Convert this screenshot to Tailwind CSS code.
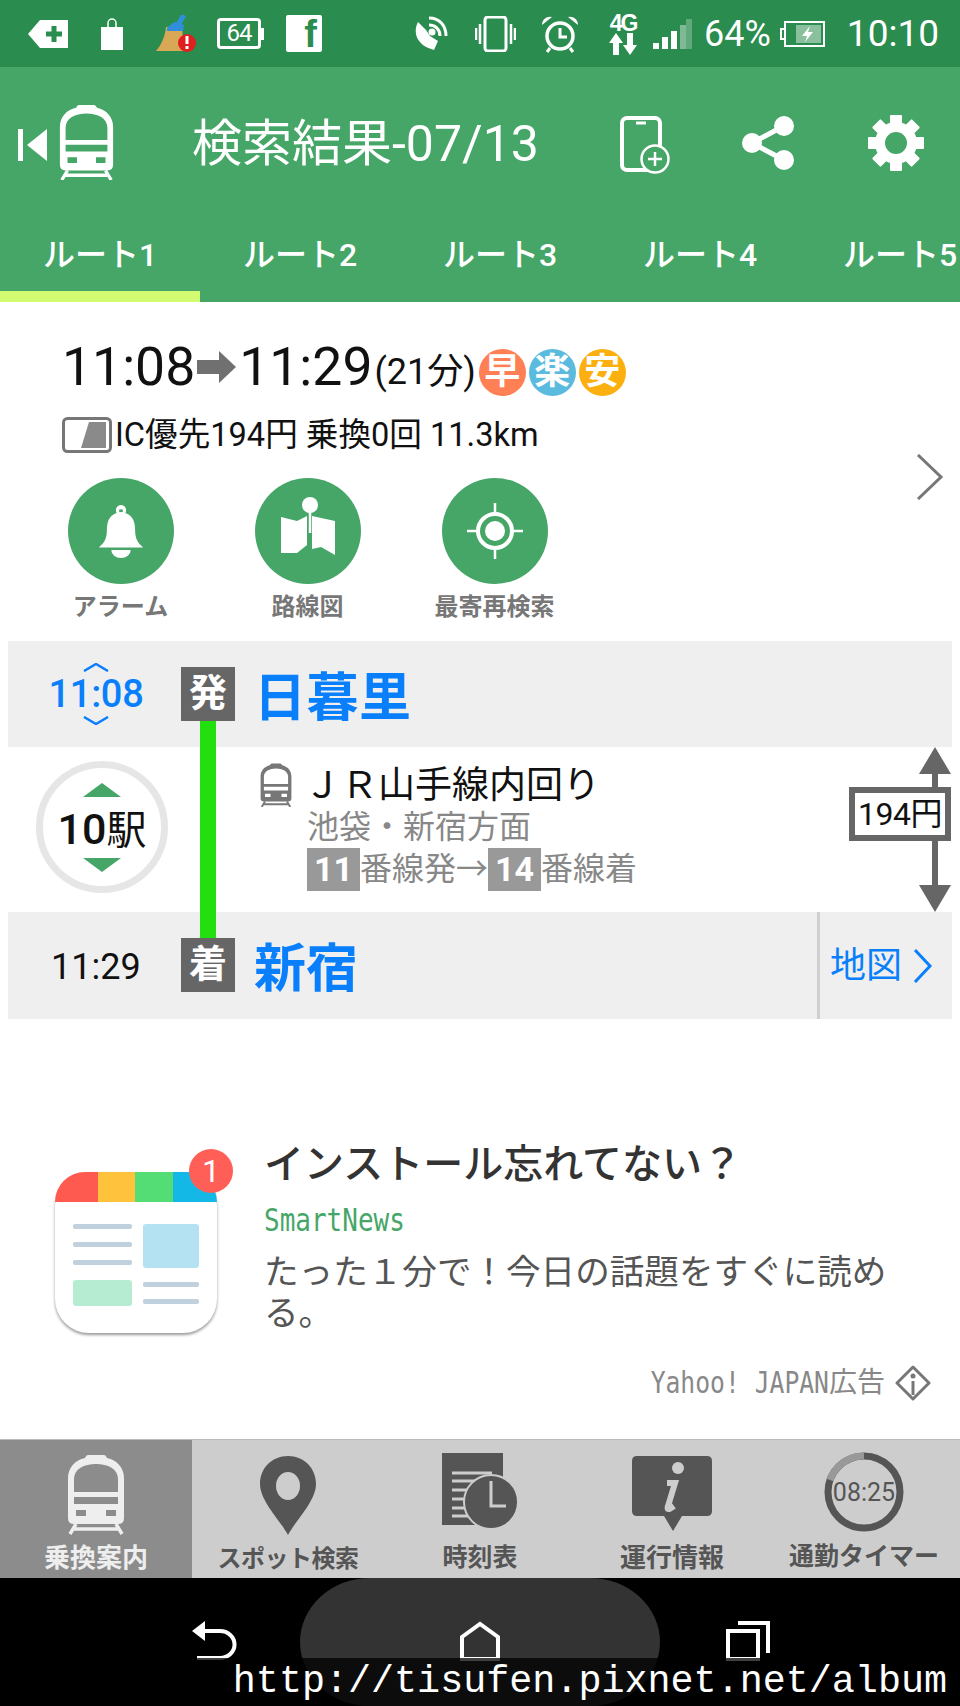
<!DOCTYPE html>
<html>
<head>
    <meta charset="utf-8">
    <title>検索結果</title>
    <script src="https://cdn.jsdelivr.net/npm/@tailwindcss/browser@4"></script>
</head>
<body class="font-[Roboto,'Noto_Sans_CJK_JP',sans-serif] bg-white">
<svg width="0" height="0" class="absolute">
    <symbol id="train" viewBox="0 0 60 80">
        <path fill-rule="evenodd" fill="currentColor" d="M22 1h16q2 0 3 3c10 2 17 10 17 20v40q0 6-6 6H8q-6 0-6-6V24C2 14 9 6 19 4q1-3 3-3zM8 38V25c0-10 10-15 22-15s22 5 22 15v13zM8 43h44v7H8zM10 56v6h10v-6zM40 56v6h10v-6z"/>
        <path fill="none" stroke="currentColor" stroke-width="3.5" d="M10 70L4 80M50 70L56 80M7 75H53"/>
    </symbol>
</svg>

<div class="relative w-[960px] h-[1706px] overflow-hidden">

    <!-- Status bar -->
    <div class="h-[67px] bg-[#2a8c4e] flex items-center text-white">
        <svg class="ml-[28px]" width="40" height="28" viewBox="0 0 40 28"><path fill="white" d="M12 0H40V28H12L0 14z"/><path stroke="#2a8c4e" stroke-width="5" d="M26 6V22M18 14H34"/></svg>
        <svg class="ml-[32px]" width="24" height="32" viewBox="0 0 24 32"><path fill="white" d="M1 9H23V32H1z"/><path fill="none" stroke="white" stroke-width="1.5" d="M8 9V5a4 4 0 0 1 8 0V9"/></svg>
        <svg class="ml-[32px]" width="40" height="38" viewBox="0 0 40 38"><path fill="#d9a857" d="M10 12H26L28 36H0C5 30 9 22 10 12z"/><path stroke="#2f8fdc" stroke-width="5" d="M28 0L22 10"/><path fill="#2f8fdc" d="M11 13l7-6 10 3-1 6H11z"/><circle cx="31" cy="28" r="9" fill="#e01f1f"/><path stroke="white" stroke-width="3" d="M31 21V29M31 31V34"/></svg>
        <div class="ml-[21px] w-[44px] h-[31px] border-[3px] border-white rounded-[4px] text-[24px] leading-[25px] text-center tracking-[-1px]">64</div>
        <div class="w-[3px] h-[12px] bg-white"></div>
        <div class="ml-[22px] w-[36px] h-[37px] bg-white rounded-[2px] text-[#2a8c4e] font-bold text-[38px] leading-[39px] text-right pr-[5px] font-['Liberation_Sans',sans-serif]">f</div>
        <svg class="ml-[92px]" width="34" height="35" viewBox="0 0 34 35"><path fill="white" d="M4 6C-2 18 4 30 20 34L24 25 16 20 12 14z"/><path fill="none" stroke="white" stroke-width="3" d="M15 2C26 2 32 10 32 20M15 9C21 9 26 13 26 20"/><circle cx="18" cy="16" r="3.5" fill="white"/></svg>
        <svg class="ml-[27px]" width="41" height="36" viewBox="0 0 41 36"><rect x="10" y="1" width="21" height="34" rx="3" fill="none" stroke="white" stroke-width="3"/><path stroke="white" stroke-width="2.5" d="M5 8V28M1 12V24M36 8V28M40 12V24"/></svg>
        <svg class="ml-[25px]" width="38" height="38" viewBox="0 0 38 38"><circle cx="19" cy="21" r="13" fill="none" stroke="white" stroke-width="3.5"/><path fill="none" stroke="white" stroke-width="3" d="M19 13V22H26M9 33L6 37M29 33L32 37"/><path fill="white" d="M1 10A8 8 0 0 1 11 2zM37 10A8 8 0 0 0 27 2z"/></svg>
        <div class="ml-[29px] w-[30px] flex flex-col items-center">
            <span class="text-[23px] leading-[20px] font-bold font-['Liberation_Sans',sans-serif] tracking-[-2px]">4G</span>
            <svg width="30" height="22" viewBox="0 0 30 22"><path fill="white" d="M8 0L15 10H11V22H5V10H1zM22 22L15 12H19V0H25V12H29z"/></svg>
        </div>
        <svg class="ml-[15px]" width="39" height="30" viewBox="0 0 39 30"><path fill="white" d="M0 24H6V30H0zM9 18H15V30H9zM18 12H24V30H18z"/><path fill="white" fill-opacity=".4" d="M27 6H33V30H27z"/><path fill="white" fill-opacity=".25" d="M33 0H39V30H33z"/></svg>
        <span class="ml-[12px] text-[36px] leading-[40px]">64%</span>
        <svg class="ml-[9px]" width="45" height="26" viewBox="0 0 45 26"><path fill="none" stroke="white" stroke-width="2" d="M4 8H1V18H4M5 1H44V25H5z"/><path fill="white" fill-opacity=".45" d="M16 4H41V22H16z"/><path fill="white" d="M30 5L22 15H27L25 21 33 11H28z"/></svg>
        <span class="ml-[22px] text-[37px] leading-[40px]">10:10</span>
    </div>

    <!-- Header -->
    <div class="h-[235px] bg-[#46a667] text-white flex flex-col">
        <div class="h-[153px] flex items-center">
            <svg class="ml-[18px] mt-[2px]" width="30" height="32" viewBox="0 0 30 32"><path fill="white" d="M0 0H5V32H0zM29 0V32L9 16z"/></svg>
            <svg class="ml-[10px] mt-[-4px]" width="57" height="76"><use href="#train"/></svg>
            <span class="ml-[77px] w-[350px] text-[50px] leading-[60px] whitespace-nowrap">検索結果-07/13</span>
            <svg class="ml-[78px] mt-[2px]" width="50" height="58" viewBox="0 0 50 58"><rect x="2" y="2" width="38" height="52" rx="5" fill="none" stroke="white" stroke-width="4"/><path stroke="white" stroke-width="3" d="M16 7H26"/><circle cx="35" cy="43" r="13.5" fill="#46a667" stroke="white" stroke-width="2.5"/><path stroke="white" stroke-width="2.5" d="M35 36V50M28 43H42"/></svg>
            <svg class="ml-[71px] mt-[-2px]" width="54" height="54" viewBox="0 0 54 54"><path fill="none" stroke="white" stroke-width="5" d="M43 10L11 27L43 44"/><circle cx="43" cy="10" r="10" fill="white"/><circle cx="11" cy="27" r="10" fill="white"/><circle cx="43" cy="44" r="10" fill="white"/></svg>
            <svg class="ml-[73px] mt-[-2px]" width="56" height="56" viewBox="0 0 56 56">
                <circle cx="28" cy="28" r="16" fill="none" stroke="white" stroke-width="10"/>
                <g fill="white">
                    <rect x="22" y="0" width="12" height="12" rx="1"/>
                    <rect x="22" y="44" width="12" height="12" rx="1"/>
                    <rect x="0" y="22" width="12" height="12" rx="1"/>
                    <rect x="44" y="22" width="12" height="12" rx="1"/>
                    <rect x="22" y="0" width="12" height="12" rx="1" transform="rotate(45 28 28)"/>
                    <rect x="22" y="44" width="12" height="12" rx="1" transform="rotate(45 28 28)"/>
                    <rect x="0" y="22" width="12" height="12" rx="1" transform="rotate(45 28 28)"/>
                    <rect x="44" y="22" width="12" height="12" rx="1" transform="rotate(45 28 28)"/>
                </g>
            </svg>
        </div>
        <div class="flex w-[1000px] h-[82px]">
            <div class="w-[200px] flex flex-col justify-end items-center border-b-[11px] border-[#d2fb72]"><span class="text-[32px] leading-[40px] font-medium mb-[16px]">ルート1</span></div>
            <div class="w-[200px] flex flex-col justify-end items-center border-b-[11px] border-transparent"><span class="text-[32px] leading-[40px] font-medium mb-[16px]">ルート2</span></div>
            <div class="w-[200px] flex flex-col justify-end items-center border-b-[11px] border-transparent"><span class="text-[32px] leading-[40px] font-medium mb-[16px]">ルート3</span></div>
            <div class="w-[200px] flex flex-col justify-end items-center border-b-[11px] border-transparent"><span class="text-[32px] leading-[40px] font-medium mb-[16px]">ルート4</span></div>
            <div class="w-[200px] flex flex-col justify-end items-center border-b-[11px] border-transparent"><span class="text-[32px] leading-[40px] font-medium mb-[16px]">ルート5</span></div>
        </div>
    </div>

    <!-- Summary -->
    <div class="h-[339px] flex">
        <div class="flex-1">
            <div class="mt-[32px] ml-[62px] h-[65px] flex items-center text-[#111]">
                <span class="text-[53.5px] leading-[60px]">11:08</span>
                <svg class="ml-[2px]" width="39" height="32" viewBox="0 0 39 32"><path fill="#707070" d="M0 9H22V0L39 16 22 32V23H0z"/></svg>
                <span class="ml-[3px] text-[53.5px] leading-[60px]">11:29</span>
                <span class="ml-[2px] mt-[10px] text-[36px] leading-[44px]">(21分)</span>
                <div class="ml-[3px] mt-[12px] w-[47px] h-[47px] rounded-full bg-[#ff8055] text-white font-bold text-[36px] leading-[46px] text-center">早</div>
                <div class="ml-[3px] mt-[12px] w-[47px] h-[47px] rounded-full bg-[#5bbbdf] text-white font-bold text-[36px] leading-[46px] text-center">楽</div>
                <div class="ml-[3px] mt-[12px] w-[47px] h-[47px] rounded-full bg-[#fbb010] text-white font-bold text-[36px] leading-[46px] text-center">安</div>
            </div>
            <div class="mt-[18px] ml-[62px] h-[36px] flex items-center text-[#111]">
                <svg width="50" height="36" viewBox="0 0 50 36"><rect x="1.5" y="1.5" width="47" height="33" rx="4" fill="white" stroke="#777" stroke-width="3"/><path fill="#8a8a8a" d="M19 31L27 5H44V31z"/></svg>
                <span class="ml-[3px] text-[32.6px] leading-[40px] whitespace-nowrap">IC優先194円 乗換0回 11.3km</span>
            </div>
            <div class="mt-[25px] ml-[27px] flex">
                <div class="w-[187px] flex flex-col items-center">
                    <div class="w-[106px] h-[106px] rounded-full bg-[#46a667] flex items-center justify-center">
                        <svg width="50" height="53" viewBox="0 0 50 60"><path fill="white" d="M25 0a6 6 0 0 1 5 9c9 3 11 11 11 20 0 9 3 14 9 19H0c6-5 9-10 9-19 0-9 2-17 11-20a6 6 0 0 1 5-9zM14 51H36A11 9 0 0 1 14 51z"/><path fill="#46a667" d="M23 5h4v3h-4z"/></svg>
                    </div>
                    <span class="mt-[6px] h-[34px] text-[24px] leading-[34px] font-bold text-[#777]">アラーム</span>
                </div>
                <div class="w-[187px] flex flex-col items-center">
                    <div class="w-[106px] h-[106px] rounded-full bg-[#46a667] flex items-center justify-center">
                        <svg width="54" height="58" viewBox="0 0 54 58" class="mt-[-10px]"><path fill="white" d="M0 20L16 24 26 19V48L16 56 0 56zM31 19L54 24V58L40 50 31 52z"/><circle cx="29" cy="8" r="8" fill="white"/><path stroke="white" stroke-width="2.5" d="M29 10V36"/></svg>
                    </div>
                    <span class="mt-[6px] h-[34px] text-[24px] leading-[34px] font-bold text-[#777]">路線図</span>
                </div>
                <div class="w-[187px] flex flex-col items-center">
                    <div class="w-[106px] h-[106px] rounded-full bg-[#46a667] flex items-center justify-center">
                        <svg width="56" height="56" viewBox="0 0 56 56"><circle cx="28" cy="28" r="17" fill="none" stroke="white" stroke-width="4"/><circle cx="28" cy="28" r="10" fill="white"/><path stroke="white" stroke-width="2.5" d="M28 0V12M28 44V56M0 28H12M44 28H56"/></svg>
                    </div>
                    <span class="mt-[6px] h-[34px] text-[24px] leading-[34px] font-bold text-[#777]">最寄再検索</span>
                </div>
            </div>
        </div>
        <svg class="mt-[152px] mr-[16px]" width="28" height="46" viewBox="0 0 28 46"><path fill="none" stroke="#777" stroke-width="3" d="M2 1L25 23 2 45"/></svg>
    </div>

    <!-- Route -->
    <div class="relative">
        <div class="mx-[8px] h-[106px] bg-[#efefef] flex items-center">
            <div class="ml-[41px] w-[94px] flex flex-col items-center text-[#0a7ffb]">
                <svg width="26" height="9" viewBox="0 0 26 9"><path fill="none" stroke="currentColor" stroke-width="2.5" d="M1 8L13 1 25 8"/></svg>
                <span class="text-[38px] leading-[44px] font-medium tracking-[-0.3px]">11:08</span>
                <svg width="26" height="9" viewBox="0 0 26 9"><path fill="none" stroke="currentColor" stroke-width="2.5" d="M1 1L13 8 25 1"/></svg>
            </div>
            <div class="relative z-10 ml-[38px] w-[54px] h-[54px] bg-[#666] text-white font-bold text-[38px] leading-[52px] text-center">発</div>
            <span class="ml-[19px] mt-[9px] text-[52px] leading-[60px] font-bold text-[#0a7ffb] tracking-[0.5px]">日暮里</span>
        </div>

        <div class="h-[165px] flex">
            <div class="ml-[36px] mt-[14px] w-[132px] h-[132px] rounded-full border-[7px] border-[#e6e6e6] flex flex-col items-center">
                <svg class="mt-[15px]" width="38" height="14" viewBox="0 0 38 14"><path fill="#46a667" d="M19 0L38 14H0z"/></svg>
                <div class="mt-[6px] h-[52px] flex items-baseline text-[#111] leading-[52px] whitespace-nowrap"><span class="text-[43px] font-medium">10</span><span class="text-[40px]">駅</span></div>
                <svg class="mt-[3px]" width="38" height="14" viewBox="0 0 38 14"><path fill="#46a667" d="M0 0H38L19 14z"/></svg>
            </div>
            <div class="ml-[90px] pt-[17px] w-[440px]">
                <div class="h-[42px] flex items-center">
                    <svg class="text-[#777]" width="36" height="44"><use href="#train"/></svg>
                    <span class="ml-[10px] mt-[2px] text-[37px] leading-[42px] text-[#111] whitespace-nowrap">ＪＲ山手線内回り</span>
                </div>
                <div class="ml-[49px] h-[42px] text-[32px] leading-[42px] text-[#888] whitespace-nowrap">池袋・新宿方面</div>
                <div class="ml-[49px] h-[43px] flex items-center text-[32px] leading-[43px] text-[#888]">
                    <span class="w-[53px] h-[43px] bg-[#999] text-white font-bold text-[34px] text-center">11</span>
                    <span class="whitespace-nowrap">番線発→</span>
                    <span class="w-[53px] h-[43px] bg-[#999] text-white font-bold text-[34px] text-center">14</span>
                    <span class="whitespace-nowrap">番線着</span>
                </div>
            </div>
            <div class="ml-auto mr-[9px] w-[102px] flex flex-col items-end">
                <svg width="32" height="27" viewBox="0 0 32 27"><path fill="#666" d="M16 0L32 27H0z"/></svg>
                <div class="w-[6px] h-[13px] mr-[13px] bg-[#666]"></div>
                <div class="w-[102px] h-[54px] border-[6px] border-[#666] bg-white text-[32px] leading-[42px] text-center text-[#111] tracking-[-0.5px] whitespace-nowrap">194円</div>
                <div class="w-[6px] h-[44px] mr-[13px] bg-[#666]"></div>
                <svg width="32" height="27" viewBox="0 0 32 27"><path fill="#666" d="M0 0H32L16 27z"/></svg>
            </div>
        </div>

        <div class="mx-[8px] h-[107px] bg-[#efefef] flex">
            <span class="ml-[43px] mt-[2px] w-[90px] self-center text-[36px] leading-[44px] text-[#111] whitespace-nowrap">11:29</span>
            <div class="relative z-10 ml-[40px] mt-[26px] w-[54px] h-[54px] bg-[#666] text-white font-bold text-[38px] leading-[52px] text-center">着</div>
            <span class="ml-[19px] mt-[8px] self-center text-[52px] leading-[60px] font-bold text-[#0a7ffb]">新宿</span>
            <div class="ml-auto w-[135px] border-l-[3px] border-[#cfcfcf] flex items-center text-[#0a7ffb]">
                <span class="ml-[10px] text-[36px] leading-[44px] whitespace-nowrap">地図</span>
                <svg class="ml-[11px]" width="20" height="34" viewBox="0 0 20 34"><path fill="none" stroke="#0a7ffb" stroke-width="3" d="M2 1L17 17 2 33"/></svg>
            </div>
        </div>

        <!-- line between stations -->
        <div class="absolute left-[200px] top-[79px] w-[16px] h-[218px] bg-[#22e00f]"></div>
    </div>

    <!-- Ad -->
    <div class="h-[420px] flex flex-col">
        <div class="pt-[123px] flex">
            <div class="relative ml-[55px] mt-[30px] w-[162px] h-[161px] rounded-[34px] bg-white shadow-[0_2px_3px_rgba(0,0,0,0.4)] overflow-visible">
                <div class="h-[30px] rounded-t-[34px] overflow-hidden flex">
                    <div class="w-[43px] bg-[#ff5a50]"></div>
                    <div class="w-[37px] bg-[#ffc23c]"></div>
                    <div class="w-[38px] bg-[#55dd75]"></div>
                    <div class="w-[44px] bg-[#14b8e6]"></div>
                </div>
                <div class="flex gap-[11px] ml-[18px] mt-[22px]">
                    <div class="w-[59px] flex flex-col">
                        <div class="h-[5px] rounded-[2px] bg-[#c0d0dc]"></div>
                        <div class="mt-[13px] h-[5px] rounded-[2px] bg-[#c0d0dc]"></div>
                        <div class="mt-[13px] h-[5px] rounded-[2px] bg-[#c0d0dc]"></div>
                        <div class="mt-[15px] h-[26px] rounded-[3px] bg-[#b5ecd2]"></div>
                    </div>
                    <div class="w-[56px] flex flex-col">
                        <div class="h-[44px] rounded-[3px] bg-[#b4e2f2]"></div>
                        <div class="mt-[14px] h-[5px] rounded-[2px] bg-[#c0d0dc]"></div>
                        <div class="mt-[12px] h-[5px] rounded-[2px] bg-[#c0d0dc]"></div>
                    </div>
                </div>
                <div class="absolute left-[134px] top-[-23px] w-[44px] h-[44px] rounded-full bg-[#ff5f57] text-white text-[32px] leading-[44px] text-center">1</div>
            </div>
            <div class="ml-[47px] w-[640px]">
                <div class="h-[46px] text-[40px] leading-[46px] font-medium text-[#333] whitespace-nowrap">インストール忘れてない？</div>
                <div class="mt-[12px] h-[40px] text-[26px] leading-[40px] text-[#46a667] font-['DejaVu_Sans_Mono',monospace] scale-y-[1.2] origin-center">SmartNews</div>
                <div class="mt-[12px] text-[34.6px] leading-[41px] text-[#555]">たった１分で！今日の話題をすぐに読める。</div>
            </div>
        </div>
        <div class="mt-[31px] pr-[29px] h-[36px] flex justify-end items-center text-[#888] whitespace-nowrap">
            <span class="text-[24.7px] leading-[36px] font-['DejaVu_Sans_Mono',monospace] scale-y-[1.2] origin-center">Yahoo! JAPAN</span>
            <span class="text-[28px] leading-[36px]">広告</span>
            <svg class="ml-[10px]" width="36" height="36" viewBox="0 0 36 36"><path fill="none" stroke="#777" stroke-width="3" stroke-linejoin="round" d="M18 2L34 18 18 34 2 18z"/><circle cx="18" cy="11" r="2.5" fill="#777"/><path stroke="#777" stroke-width="3" d="M18 16V30"/></svg>
        </div>
    </div>

    <!-- Bottom tabs -->
    <div class="h-[139px] grid grid-cols-5 bg-[#cdcdcd] text-[#555] border-t-[1px] border-[#bbb]">
        <div class="bg-[#8c8c8c] text-[#eee] flex flex-col items-center">
            <svg class="mt-[13px]" width="60" height="82"><use href="#train"/></svg>
            <span class="mt-[6px] text-[26px] leading-[34px] font-bold whitespace-nowrap">乗換案内</span>
        </div>
        <div class="flex flex-col items-center">
            <svg class="mt-[16px]" width="56" height="79" viewBox="0 0 56 79"><path fill-rule="evenodd" fill="#555" d="M28 0C12 0 0 12 0 28c0 17 20 36 28 51 8-15 28-34 28-51C56 12 44 0 28 0zM28 16a12 14 0 1 1 0 28 12 14 0 0 1 0-28z"/></svg>
            <span class="mt-[7px] text-[24px] leading-[34px] font-bold tracking-[-0.5px] whitespace-nowrap">スポット検索</span>
        </div>
        <div class="flex flex-col items-center">
            <svg class="mt-[13px]" width="78" height="78" viewBox="0 0 78 78"><path fill="#555" d="M1 0H62V72H1z"/><path stroke="#cdcdcd" stroke-width="3" d="M11 20H51M11 28H51M11 37H36M11 46H30M11 55H30M11 63H33"/><circle cx="50" cy="49" r="27" fill="#555" stroke="#cdcdcd" stroke-width="2"/><path fill="none" stroke="#cdcdcd" stroke-width="3" d="M50 28V53H65"/></svg>
            <span class="mt-[10px] text-[25px] leading-[34px] font-bold whitespace-nowrap">時刻表</span>
        </div>
        <div class="flex flex-col items-center">
            <svg class="mt-[16px]" width="80" height="75" viewBox="0 0 80 75"><path fill="#555" d="M5 0H75q5 0 5 5V55q0 5-5 5H50L41 75 32 60H5q-5 0-5-5V5q0-5 5-5z"/><circle cx="46" cy="12" r="6" fill="#cdcdcd"/><path fill="none" stroke="#cdcdcd" stroke-width="6" d="M35 27H43L36 50Q34 56 42 50"/></svg>
            <span class="mt-[10px] text-[26px] leading-[34px] font-bold whitespace-nowrap">運行情報</span>
        </div>
        <div class="flex flex-col items-center">
            <svg class="mt-[12px]" width="80" height="80" viewBox="0 0 80 80"><circle cx="40" cy="40" r="36" fill="none" stroke="#555" stroke-width="7"/><path fill="none" stroke="#999" stroke-width="7" d="M40 4A36 36 0 0 0 6 28"/><text x="40" y="49" text-anchor="middle" font-family="Roboto" font-size="25" fill="#555">08:25</text></svg>
            <span class="mt-[8px] text-[25px] leading-[34px] font-bold whitespace-nowrap">通勤タイマー</span>
        </div>
    </div>

    <!-- Nav bar -->
    <div class="relative h-[128px] bg-black">
        <div class="absolute left-[300px] top-0 w-[360px] h-[128px] bg-[#333] rounded-[70px/64px]"></div>
        <div class="relative flex pt-[43px]">
            <svg class="ml-[192px]" width="46" height="40" viewBox="0 0 46 40"><path fill="white" d="M0 10L13 0V20z"/><path fill="none" stroke="white" stroke-width="4" d="M10 10H28a14 13 0 0 1 0 27H5"/></svg>
            <svg class="ml-[222px]" width="40" height="40" viewBox="0 0 40 40"><path fill="none" stroke="white" stroke-width="4" d="M2 38V16L20 3 38 16V38z"/></svg>
            <svg class="ml-[226px]" width="44" height="40" viewBox="0 0 44 40"><path fill="none" stroke="white" stroke-width="4" d="M2 38V10H32V38zM12 2H42V32"/></svg>
        </div>
        <!-- watermark -->
        <div class="absolute left-0 right-0 top-[80px] h-[48px] bg-black/75 flex justify-end items-center pr-[13px]">
            <span class="font-['Liberation_Mono',monospace] text-[38.4px] leading-[48px] text-white whitespace-nowrap">http://tisufen.pixnet.net/album</span>
        </div>
    </div>
</div>
</body>
</html>
